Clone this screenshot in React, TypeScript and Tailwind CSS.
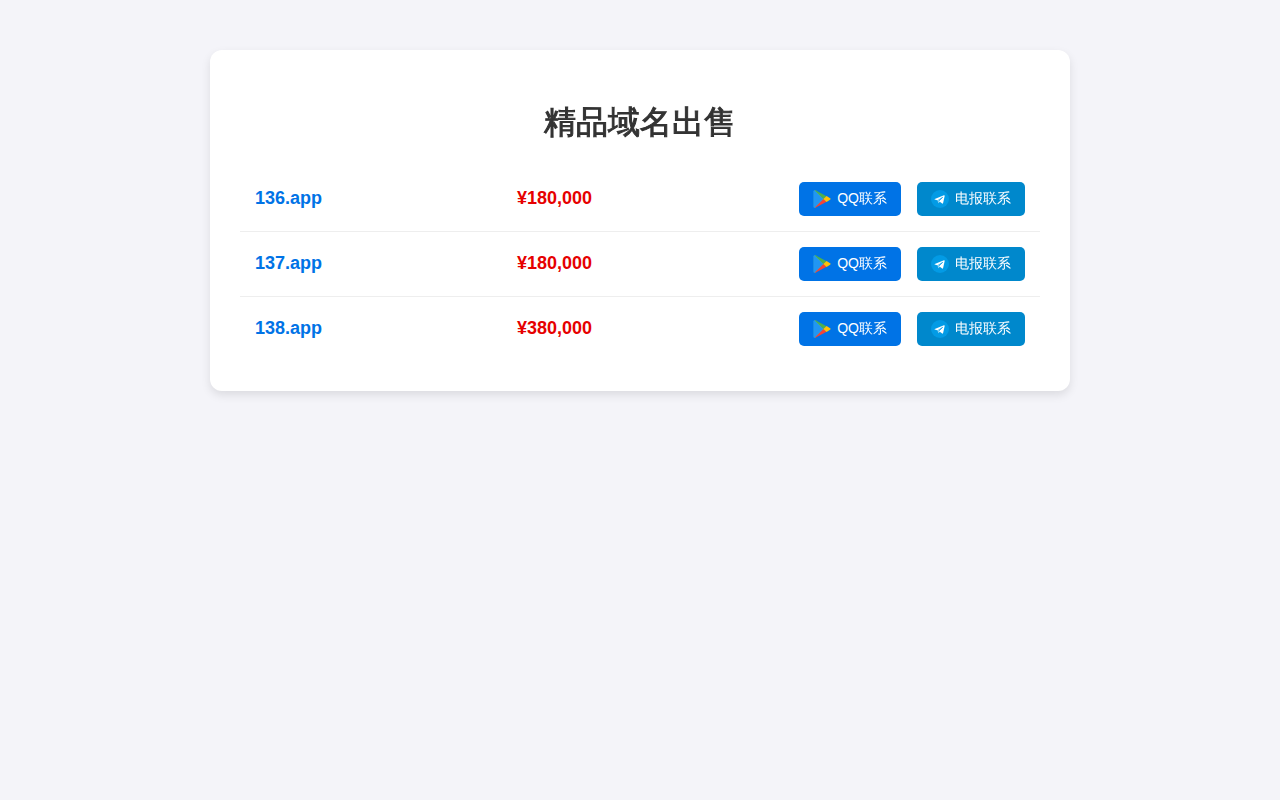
type Domain = {
  name: string;
  price: string;
};

const DOMAINS: Domain[] = [
  { name: "136.app", price: "¥180,000" },
  { name: "137.app", price: "¥180,000" },
  { name: "138.app", price: "¥380,000" },
];

const BUTTON_CLASS = "inline-flex h-[34px] items-center gap-1.5 rounded-[5px] px-3.5 text-sm text-white";

function PlayIcon() {
  return (
    <svg viewBox="0 0 48 48" className="size-[18px]" aria-hidden="true">
      <path fill="#4db6ac" d="M7.700 1.500C6 .6 2 .8 2 4v40c0 3 3.700 3.500 5.400 2.600L29 24z" />
      <path fill="#2196f3" d="M1.500 3v42c0 1.400 1 2.400 2.800 2.500L27 24 4 .6C2.500.8 1.500 1.700 1.500 3z" />
      <path fill="#4caf50" d="M36.200 16.700 7.700 1.200C6.700.6 5 .4 4 .6L28 24z" />
      <path fill="#f44336" d="M28 24 4.300 47.500c1 .1 2.200-.1 3.100-.6l28.800-15.600z" />
      <path fill="#ffc107" d="m45.500 22.200-9.300-6.500L27.500 24l8.700 8.300 9.300-6.500c2-1 2-2.600 0-3.600z" />
    </svg>
  );
}

function TelegramIcon() {
  return (
    <svg viewBox="0 0 48 48" className="size-[18px]" aria-hidden="true">
      <circle cx="24" cy="24" r="24" fill="#039be5" />
      <path
        fill="#fff"
        d="M10 24.200 34.500 14c1.300-.5 2.300.2 2 1.800l-4.200 19c-.3 1.500-1.200 1.900-2.500 1.200l-6.300-4.700-3.100 3c-.5.500-1 .7-1.500.7l-.9-7-7.800-2.500c-1.400-.4-1.400-1-.2-1.300z"
      />
      <path fill="none" stroke="#039be5" strokeWidth="2" d="m17.500 28.500 13.500-9-10 10-1 4" />
    </svg>
  );
}

function DomainRow({ domain }: { domain: Domain }) {
  return (
    <tr className="border-b border-[#eeeeee] last:border-b-0">
      <td className="w-[262px] px-[15px] pt-[15px] pb-[17px] text-lg leading-8 font-bold text-[#0073e6]">{domain.name}</td>
      <td className="px-[15px] pt-[15px] pb-[17px] text-lg leading-8 font-bold text-[#e60000]">{domain.price}</td>
      <td className="p-[15px]">
        <div className="flex justify-end gap-4">
          <button type="button" className={`${BUTTON_CLASS} bg-[#0073e6]`}>
            <PlayIcon />
            <span className="pb-0.5">QQ联系</span>
          </button>
          <button type="button" className={`${BUTTON_CLASS} bg-[#0088cc]`}>
            <TelegramIcon />
            <span className="pb-0.5">电报联系</span>
          </button>
        </div>
      </td>
    </tr>
  );
}

export default function App() {
  return (
    <div className="min-h-screen bg-[#f4f4f9] px-5 py-[50px] font-['Liberation_Sans','WenQuanYi_Zen_Hei','Noto_Sans_CJK_SC',sans-serif]">
      <main className="mx-auto max-w-[860px] rounded-xl bg-white p-[30px] shadow-[0_4px_10px_rgba(0,0,0,0.1)]">
        <h1 className="pt-[18px] pb-[21px] text-center text-[32px] leading-[48px] font-bold text-[#333333] [-webkit-text-stroke:1px_#333333]">
          精品域名出售
        </h1>
        <table className="w-full border-collapse">
          <tbody>
            {DOMAINS.map((domain) => (
              <DomainRow key={domain.name} domain={domain} />
            ))}
          </tbody>
        </table>
      </main>
    </div>
  );
}
